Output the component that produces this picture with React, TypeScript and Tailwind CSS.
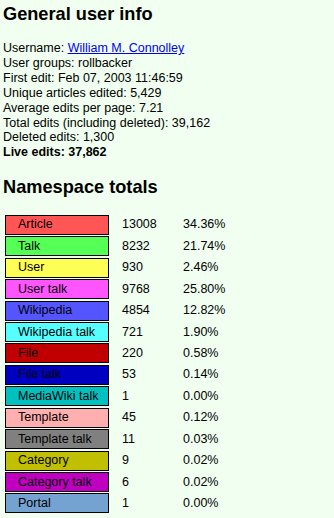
const info: [string, string][] = [
  ["User groups", "rollbacker"],
  ["First edit", "Feb 07, 2003 11:46:59"],
  ["Unique articles edited", "5,429"],
  ["Average edits per page", "7.21"],
  ["Total edits (including deleted)", "39,162"],
  ["Deleted edits", "1,300"],
];

const namespaces = [
  { name: "Article", color: "bg-[#ff5555]", count: 13008, pct: "34.36%" },
  { name: "Talk", color: "bg-[#55ff55]", count: 8232, pct: "21.74%" },
  { name: "User", color: "bg-[#ffff55]", count: 930, pct: "2.46%" },
  { name: "User talk", color: "bg-[#ff55ff]", count: 9768, pct: "25.80%" },
  { name: "Wikipedia", color: "bg-[#5555ff]", count: 4854, pct: "12.82%" },
  { name: "Wikipedia talk", color: "bg-[#55ffff]", count: 721, pct: "1.90%" },
  { name: "File", color: "bg-[#c00000]", count: 220, pct: "0.58%" },
  { name: "File talk", color: "bg-[#0000c0]", count: 53, pct: "0.14%" },
  { name: "MediaWiki talk", color: "bg-[#00c0c0]", count: 1, pct: "0.00%" },
  { name: "Template", color: "bg-[#ffafaf]", count: 45, pct: "0.12%" },
  { name: "Template talk", color: "bg-[#808080]", count: 11, pct: "0.03%" },
  { name: "Category", color: "bg-[#c0c000]", count: 9, pct: "0.02%" },
  { name: "Category talk", color: "bg-[#c000c0]", count: 6, pct: "0.02%" },
  { name: "Portal", color: "bg-[#75a3d1]", count: 1, pct: "0.00%" },
];

export default function App() {
  return (
    <div className="min-h-screen bg-[#f0fff0] pl-[3px] pt-[3.5px] font-['Liberation_Sans',Arial,sans-serif] text-[12.5px] leading-[14.86px] text-black">
      <h1 className="mb-[16.3px] text-[18.2px] font-bold leading-[21.5px]">
        General user info
      </h1>
      <div>
        Username:{" "}
        <a href="#" className="text-[#0000ee] underline">
          William M. Connolley
        </a>
      </div>
      {info.map(([k, v]) => (
        <div key={k}>
          {k}: {v}
        </div>
      ))}
      <div className="font-bold">Live edits: 37,862</div>

      <h2 className="mt-[16.6px] mb-[16.7px] text-[18.2px] font-bold leading-[21.5px]">
        Namespace totals
      </h2>

      <div className="flex flex-col gap-y-[1.43px] pl-[2px]">
        {namespaces.map((n) => (
          <div key={n.name} className="flex items-center">
            <div
              className={`flex h-[20px] w-[104px] shrink-0 items-center border border-black pl-[12px] leading-[15px] ${n.color}`}
            >
              {n.name}
            </div>
            <span className="ml-[13px] w-[61px] leading-[15px]">{n.count}</span>
            <span className="leading-[15px]">{n.pct}</span>
          </div>
        ))}
      </div>
    </div>
  );
}
